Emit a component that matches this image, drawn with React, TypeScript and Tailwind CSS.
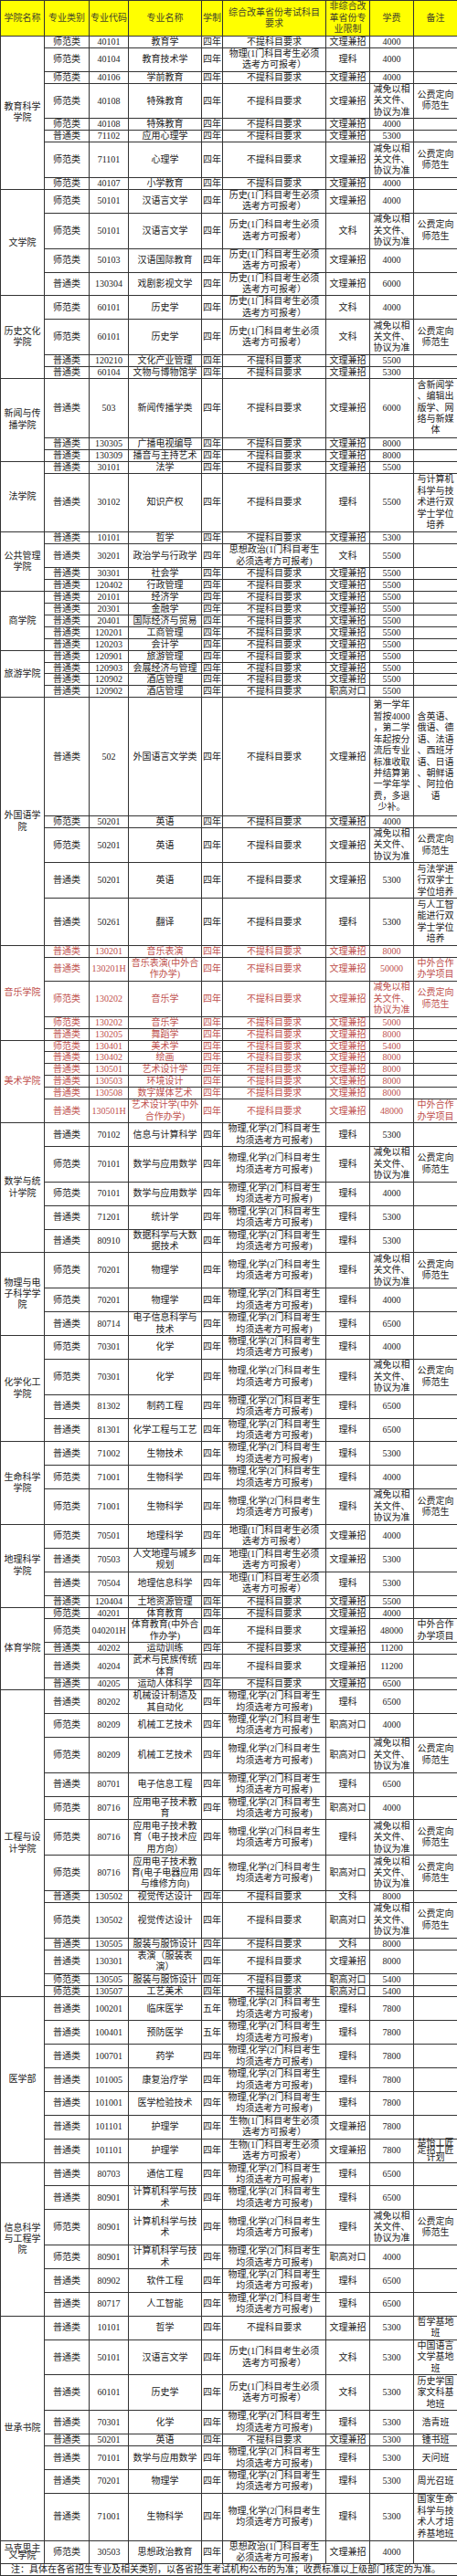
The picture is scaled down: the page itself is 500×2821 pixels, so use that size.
import React from "react";

type Row = {
  type: string;
  code: string;
  name: string;
  years: string;
  req: string;
  limit: string;
  fee: string;
  note: string;
  lines?: number;
};

type College = { name: string; red?: boolean; tight?: boolean; rows: Row[] };

const N = "不提科目要求";
const WL = "文理兼招";
const WK = "文科";
const LK = "理科";
const ZG = "职高对口";
const HIS = "历史(1门科目考生必须\n选考方可报考）";
const PHY = "物理(1门科目考生必须\n选考方可报考）";
const GEO = "地理(1门科目考生必须\n选考方可报考）";
const BIO = "生物(1门科目考生必须\n选考方可报考）";
const PC = "物理,化学(2门科目考生\n均须选考方可报考)";
const POL = "思想政治(1门科目考生\n必须选考方可报考)";
const JM = "减免以相\n关文件、\n协议为准";
const GF = "公费定向\n师范生";
const HZ = "中外合作\n办学项目";

const r = (
  type: string,
  code: string,
  name: string,
  req: string,
  limit: string,
  fee: string,
  note = "",
  years = "四年",
  lines?: number
): Row => ({ type, code, name, years, req, limit, fee, note, lines });

const colleges: College[] = [
  {
    name: "教育科学\n学院",
    rows: [
      r("师范类", "40101", "教育学", N, WL, "4000"),
      r("师范类", "40104", "教育技术学", PHY, LK, "4000"),
      r("师范类", "40106", "学前教育", N, WL, "4000"),
      r("师范类", "40108", "特殊教育", N, WL, JM, GF),
      r("师范类", "40108", "特殊教育", N, WL, "4000"),
      r("普通类", "71102", "应用心理学", N, WL, "5300"),
      r("师范类", "71101", "心理学", N, WL, JM, GF),
      r("师范类", "40107", "小学教育", N, WL, "4000"),
    ],
  },
  {
    name: "文学院",
    rows: [
      r("师范类", "50101", "汉语言文学", HIS, WL, "4000"),
      r("师范类", "50101", "汉语言文学", HIS, WK, JM, GF),
      r("师范类", "50103", "汉语国际教育", HIS, WL, "4000"),
      r("普通类", "130304", "戏剧影视文学", HIS, WL, "6000"),
    ],
  },
  {
    name: "历史文化\n学院",
    rows: [
      r("师范类", "60101", "历史学", HIS, WK, "4000"),
      r("师范类", "60101", "历史学", HIS, WK, JM, GF),
      r("普通类", "120210", "文化产业管理", N, WL, "5500"),
      r("普通类", "60104", "文物与博物馆学", N, WL, "5300"),
    ],
  },
  {
    name: "新闻与传\n播学院",
    rows: [
      r("普通类", "503", "新闻传播学类", N, WL, "6000", "含新闻学\n、编辑出\n版学、网\n络与新媒\n体"),
      r("普通类", "130305", "广播电视编导", N, WL, "8000"),
      r("普通类", "130309", "播音与主持艺术", N, WL, "8000"),
    ],
  },
  {
    name: "法学院",
    rows: [
      r("普通类", "30101", "法学", N, WL, "5500"),
      r("普通类", "30102", "知识产权", N, LK, "5500", "与计算机\n科学与技\n术进行双\n学士学位\n培养"),
    ],
  },
  {
    name: "公共管理\n学院",
    rows: [
      r("普通类", "10101", "哲学", N, WL, "5300"),
      r("普通类", "30201", "政治学与行政学", POL, WK, "5500"),
      r("普通类", "30301", "社会学", N, WL, "5500"),
      r("普通类", "120402", "行政管理", N, WL, "5500"),
    ],
  },
  {
    name: "商学院",
    rows: [
      r("普通类", "20101", "经济学", N, WL, "5500"),
      r("普通类", "20301", "金融学", N, WL, "5500"),
      r("普通类", "20401", "国际经济与贸易", N, WL, "5500"),
      r("普通类", "120201", "工商管理", N, WL, "5500"),
      r("普通类", "120203", "会计学", N, WL, "5500"),
    ],
  },
  {
    name: "旅游学院",
    rows: [
      r("普通类", "120901", "旅游管理", N, WL, "5500"),
      r("普通类", "120903", "会展经济与管理", N, WL, "5500"),
      r("普通类", "120902", "酒店管理", N, WL, "5500"),
      r("普通类", "120902", "酒店管理", N, ZG, "5500"),
    ],
  },
  {
    name: "外国语学\n院",
    rows: [
      r(
        "普通类",
        "502",
        "外国语言文学类",
        N,
        WL,
        "第一学年\n暂按4000\n，第二学\n年起按分\n流后专业\n标准收取\n并结算第\n一学年学\n费，多退\n少补。",
        "含英语、\n俄语、德\n语、法语\n、西班牙\n语、日语\n、朝鲜语\n、阿拉伯\n语"
      ),
      r("师范类", "50201", "英语", N, WL, "4000"),
      r("师范类", "50201", "英语", N, WL, JM, GF),
      r("普通类", "50201", "英语", N, WL, "5300", "与法学进\n行双学士\n学位培养"),
      r("普通类", "50261", "翻译", N, LK, "5300", "与人工智\n能进行双\n学士学位\n培养"),
    ],
  },
  {
    name: "音乐学院",
    red: true,
    rows: [
      r("普通类", "130201", "音乐表演", N, WL, "8000"),
      r("普通类", "130201H", "音乐表演(中外合\n作办学)", N, WL, "50000", HZ),
      r("师范类", "130202", "音乐学", N, WL, JM, GF),
      r("师范类", "130202", "音乐学", N, WL, "5000"),
      r("普通类", "130205", "舞蹈学", N, WL, "8000"),
    ],
  },
  {
    name: "美术学院",
    red: true,
    rows: [
      r("师范类", "130401", "美术学", N, WL, "5400"),
      r("普通类", "130402", "绘画", N, WL, "8000"),
      r("普通类", "130501", "艺术设计学", N, WL, "8000"),
      r("普通类", "130503", "环境设计", N, WL, "8000"),
      r("普通类", "130508", "数字媒体艺术", N, WL, "8000"),
      r("普通类", "130501H", "艺术设计学(中外\n合作办学)", N, WL, "48000", HZ),
    ],
  },
  {
    name: "数学与统\n计学院",
    rows: [
      r("普通类", "70102", "信息与计算科学", PC, LK, "5300"),
      r("师范类", "70101", "数学与应用数学", PC, LK, JM, GF),
      r("师范类", "70101", "数学与应用数学", PC, LK, "4000"),
      r("普通类", "71201", "统计学", PC, LK, "5300"),
      r("普通类", "80910", "数据科学与大数\n据技术", PC, LK, "5300"),
    ],
  },
  {
    name: "物理与电\n子科学学\n院",
    rows: [
      r("师范类", "70201", "物理学", PC, LK, JM, GF),
      r("师范类", "70201", "物理学", PC, LK, "4000"),
      r("普通类", "80714", "电子信息科学与\n技术", PC, LK, "6500"),
    ],
  },
  {
    name: "化学化工\n学院",
    rows: [
      r("师范类", "70301", "化学", PC, LK, "4000"),
      r("师范类", "70301", "化学", PC, LK, JM, GF),
      r("普通类", "81302", "制药工程", PC, LK, "6500"),
      r("普通类", "81301", "化学工程与工艺", PC, LK, "6500"),
    ],
  },
  {
    name: "生命科学\n学院",
    rows: [
      r("普通类", "71002", "生物技术", PC, LK, "5300"),
      r("师范类", "71001", "生物科学", PC, LK, "4000"),
      r("师范类", "71001", "生物科学", PC, LK, JM, GF),
    ],
  },
  {
    name: "地理科学\n学院",
    rows: [
      r("师范类", "70501", "地理科学", GEO, WL, "4000"),
      r("普通类", "70503", "人文地理与城乡\n规划", GEO, WL, "5300"),
      r("普通类", "70504", "地理信息科学", GEO, LK, "5300"),
      r("普通类", "120404", "土地资源管理", N, WL, "5500"),
    ],
  },
  {
    name: "体育学院",
    rows: [
      r("师范类", "40201", "体育教育", N, WL, "4000"),
      r("师范类", "040201H", "体育教育(中外合\n作办学)", N, WL, "48000", HZ),
      r("普通类", "40202", "运动训练", N, WL, "11200"),
      r("普通类", "40204", "武术与民族传统\n体育", N, WL, "11200"),
      r("普通类", "40205", "运动人体科学", N, WL, "6500"),
    ],
  },
  {
    name: "工程与设\n计学院",
    rows: [
      r("普通类", "80202", "机械设计制造及\n其自动化", PC, LK, "6500"),
      r("师范类", "80209", "机械工艺技术", PC, ZG, "4000"),
      r("师范类", "80209", "机械工艺技术", PC, ZG, JM, GF),
      r("普通类", "80701", "电子信息工程", PC, LK, "6500"),
      r("师范类", "80716", "应用电子技术教\n育", PC, ZG, "4000"),
      r("师范类", "80716", "应用电子技术教\n育（电子技术应\n用方向）", PC, LK, JM, GF),
      r("师范类", "80716", "应用电子技术教\n育(电子电器应用\n与维修方向)", PC, ZG, JM, GF),
      r("普通类", "130502", "视觉传达设计", N, WK, "8000"),
      r("师范类", "130502", "视觉传达设计", N, ZG, JM, GF),
      r("普通类", "130505", "服装与服饰设计", N, WK, "8000"),
      r("普通类", "130301", "表演（服装表\n演）", N, WL, "8000"),
      r("师范类", "130505", "服装与服饰设计", N, ZG, "5400"),
      r("师范类", "130507", "工艺美术", N, ZG, "5400"),
    ],
  },
  {
    name: "医学部",
    rows: [
      r("普通类", "100201", "临床医学", PC, LK, "7800", "", "五年"),
      r("普通类", "100401", "预防医学", PC, LK, "7800", "", "五年"),
      r("普通类", "100701", "药学", PC, LK, "7800"),
      r("普通类", "101005", "康复治疗学", PC, LK, "7800"),
      r("普通类", "101001", "医学检验技术", PC, LK, "7800"),
      r("普通类", "101101", "护理学", BIO, WL, "7800"),
      r("普通类", "101101", "护理学", BIO, WL, "7800", "楚怡工匠\n定招工匠\n计划", "四年", 2),
    ],
  },
  {
    name: "信息科学\n与工程学\n院",
    rows: [
      r("普通类", "80703", "通信工程", PC, LK, "6500"),
      r("普通类", "80901", "计算机科学与技\n术", PC, LK, "6500"),
      r("师范类", "80901", "计算机科学与技\n术", PC, LK, JM, GF),
      r("师范类", "80901", "计算机科学与技\n术", PC, ZG, "4000"),
      r("普通类", "80902", "软件工程", PC, LK, "6500"),
      r("普通类", "80717", "人工智能", PC, LK, "6500"),
    ],
  },
  {
    name: "世承书院",
    rows: [
      r("普通类", "10101", "哲学", N, WL, "5300", "哲学基地\n班"),
      r("普通类", "50101", "汉语言文学", HIS, WK, "5300", "中国语言\n文学基地\n班"),
      r("普通类", "60101", "历史学", HIS, WK, "5300", "历史学国\n家文科基\n地班"),
      r("普通类", "70301", "化学", PC, LK, "5300", "浩青班"),
      r("普通类", "50201", "英语", N, WL, "5300", "锺书班"),
      r("普通类", "70101", "数学与应用数学", PC, LK, "5300", "天问班"),
      r("普通类", "70201", "物理学", PC, LK, "5300", "周光召班"),
      r("普通类", "71001", "生物科学", PC, LK, "5300", "国家生命\n科学与技\n术人才培\n养基地班", "四年", 4),
    ],
  },
  {
    name: "马克思主\n义学院",
    tight: true,
    rows: [r("师范类", "30503", "思想政治教育", POL, WL, "4000")],
  },
];

// row pitch in the picture is about 12.94px per text line
const H: Record<number, string> = {
  1: "h-[12.94px]",
  2: "h-[25.88px]",
  3: "h-[38.82px]",
  4: "h-[51.76px]",
  5: "h-[64.7px]",
  10: "h-[129.4px]",
};

const count = (s: string) => (s ? s.split("\n").length : 1);

function leadingFor(n: number, rows: number) {
  if (n > rows) return rows === 2 ? "leading-[8.2px]" : "leading-[10px]";
  return n === 1 ? "leading-[11.9px]" : "leading-[12.4px]";
}

function Cell({ text, rows }: { text: string; rows: number }) {
  return (
    <td
      className={`border border-[#333] p-0 text-center align-middle whitespace-pre ${leadingFor(
        count(text),
        rows
      )}`}
    >
      {text}
    </td>
  );
}

const header = [
  "学院名称",
  "专业类别",
  "专业代码",
  "专业名称",
  "学制",
  "综合改革省份考试科目\n要求",
  "非综合改\n革省份专\n业限制",
  "学费",
  "备注",
];

export default function App() {
  return (
    <div className="w-[500px] bg-white font-[family-name:'Liberation_Serif','Noto_Sans_CJK_SC',serif] text-[10px] text-[#222]">
      <table className="w-[500px] table-fixed border-collapse">
        <colgroup>
          <col className="w-[48px]" />
          <col className="w-[49px]" />
          <col className="w-[43px]" />
          <col className="w-[80px]" />
          <col className="w-[23px]" />
          <col className="w-[113px]" />
          <col className="w-[48px]" />
          <col className="w-[48px]" />
          <col className="w-[48px]" />
        </colgroup>
        <tbody>
          <tr className="h-[38.82px] bg-[#ffff00] text-[#45452a]">
            {header.map((h, i) => (
              <Cell key={i} text={h} rows={3} />
            ))}
          </tr>
          {colleges.map((c) => {
            const sizes = c.rows.map(
              (row) =>
                row.lines ??
                Math.max(count(row.name), count(row.req), count(row.fee), count(row.note))
            );
            return c.rows.map((row, i) => (
              <tr key={c.name + i} className={`${H[sizes[i]]} ${c.red ? "text-[#c0504d]" : ""}`}>
                {i === 0 && (
                  <td
                    rowSpan={c.rows.length}
                    className={`border border-[#333] p-0 text-center align-middle whitespace-pre ${
                      c.tight ? "leading-[8.2px]" : "leading-[12.4px]"
                    }`}
                  >
                    {c.name}
                  </td>
                )}
                <Cell text={row.type} rows={sizes[i]} />
                <Cell text={row.code} rows={sizes[i]} />
                <Cell text={row.name} rows={sizes[i]} />
                <Cell text={row.years} rows={sizes[i]} />
                <Cell text={row.req} rows={sizes[i]} />
                <Cell text={row.limit} rows={sizes[i]} />
                <Cell text={row.fee} rows={sizes[i]} />
                <Cell text={row.note} rows={sizes[i]} />
              </tr>
            ));
          })}
          <tr className="h-[12.94px]">
            <td
              colSpan={9}
              className="border border-[#333] p-0 pl-[11px] text-left leading-[11.9px] whitespace-pre"
            >
              注：具体在各省招生专业及相关类别，以各省招生考试机构公布的为准；收费标准以上级部门核定的为准。
            </td>
          </tr>
        </tbody>
      </table>
    </div>
  );
}
